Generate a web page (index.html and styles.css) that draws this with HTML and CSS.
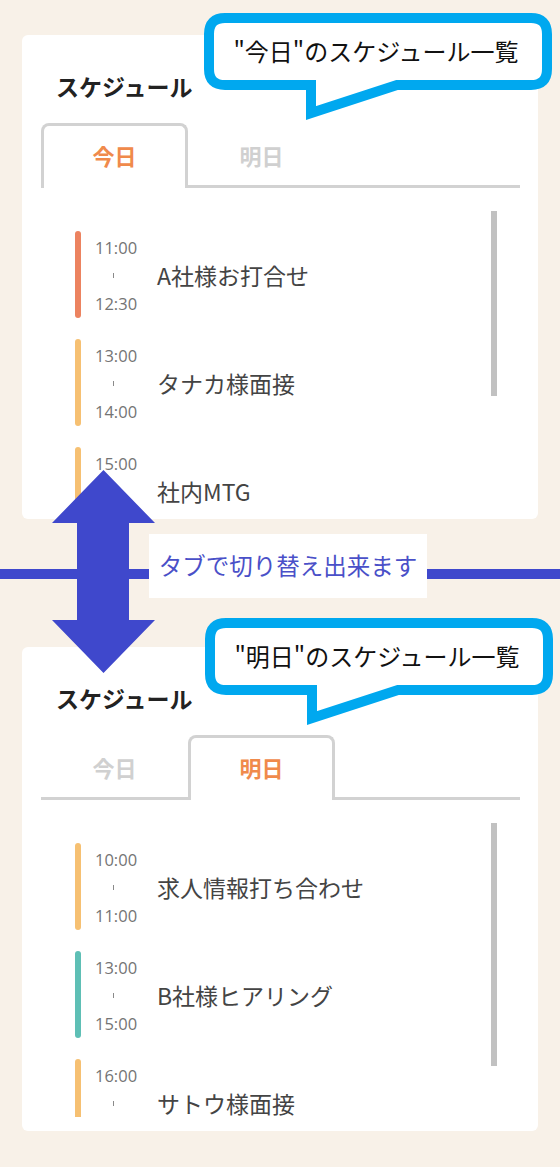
FILE: index.html
```html
<!DOCTYPE html>
<html lang="ja">
<head>
<meta charset="utf-8">
<title>スケジュール</title>
<link rel="stylesheet" href="styles.css">
</head>
<body>
<div class="page">
  <section class="card">
    <div class="bubble bubble-today">
      <svg class="bubble-shape" width="348" height="110" viewBox="0 0 348 110"><path d="M21,5 H327 Q343,5 343,21 V56 Q343,72 327,72 H193 L107,100 V72 H21 Q5,72 5,56 V21 Q5,5 21,5 Z"/></svg>
      <p class="bubble-text">"今日"のスケジュール一覧</p>
    </div>
    <h2 class="card-title">スケジュール</h2>
    <div class="tabs">
      <div class="tab is-active">今日</div>
      <div class="tab">明日</div>
    </div>
    <div class="list">
      <div class="item">
        <span class="bar bar-coral"></span>
        <div class="time"><span>11:00</span><span class="tick"></span><span>12:30</span></div>
        <div class="title">A社様お打合せ</div>
      </div>
      <div class="item">
        <span class="bar bar-orange"></span>
        <div class="time"><span>13:00</span><span class="tick"></span><span>14:00</span></div>
        <div class="title">タナカ様面接</div>
      </div>
      <div class="item">
        <span class="bar bar-orange"></span>
        <div class="time"><span>15:00</span><span class="tick"></span></div>
        <div class="title">社内MTG</div>
      </div>
      <span class="scroll-thumb" style="height:185px"></span>
    </div>
  </section>

  <div class="divider">
    <div class="divider-label">タブで切り替え出来ます</div>
  </div>

  <section class="card">
    <div class="bubble bubble-tomorrow">
      <svg class="bubble-shape" width="348" height="110" viewBox="0 0 348 110"><path d="M21,5 H327 Q343,5 343,21 V56 Q343,72 327,72 H193 L107,100 V72 H21 Q5,72 5,56 V21 Q5,5 21,5 Z"/></svg>
      <p class="bubble-text">"明日"のスケジュール一覧</p>
    </div>
    <h2 class="card-title">スケジュール</h2>
    <div class="tabs">
      <div class="tab">今日</div>
      <div class="tab is-active">明日</div>
    </div>
    <div class="list">
      <div class="item">
        <span class="bar bar-orange"></span>
        <div class="time"><span>10:00</span><span class="tick"></span><span>11:00</span></div>
        <div class="title">求人情報打ち合わせ</div>
      </div>
      <div class="item">
        <span class="bar bar-teal"></span>
        <div class="time"><span>13:00</span><span class="tick"></span><span>15:00</span></div>
        <div class="title">B社様ヒアリング</div>
      </div>
      <div class="item">
        <span class="bar bar-orange"></span>
        <div class="time"><span>16:00</span><span class="tick"></span></div>
        <div class="title">サトウ様面接</div>
      </div>
      <span class="scroll-thumb" style="height:243px"></span>
    </div>
  </section>

  <svg class="switch-arrow" width="103" height="203" viewBox="0 0 103 203"><path d="M51.5,0 L103,53 H77 V150 H103 L51.5,203 L0,150 H25 V53 H0 Z"/></svg>
</div>
</body>
</html>
```

FILE: styles.css
```css
* {
  box-sizing: border-box;
}

html, body {
  margin: 0;
  padding: 0;
}

body {
  background: #f8f1e8;
  font-family: "Noto Sans CJK JP", "Noto Sans", sans-serif;
  color: #333;
}

.page {
  position: relative;
  width: 560px;
  min-height: 1167px;
  padding-top: 35px;
}

.card {
  position: relative;
  margin: 0 22px;
  height: 484px;
  background: #fff;
  border-radius: 6px;
  padding: 36px 18px 14px 19px;
}

.card-title {
  margin: 0 0 0 15px;
  font-size: 23px;
  line-height: 30px;
  height: 30px;
  font-weight: 700;
  color: #222;
}

/* tabs */
.tabs {
  display: flex;
  margin-top: 22px;
  height: 65px;
  border-bottom: 3px solid #d2d2d2;
}

.tab {
  width: 147px;
  height: 65px;
  margin-bottom: -3px;
  padding-bottom: 4px;
  border: 3px solid transparent;
  border-bottom: 0;
  border-radius: 8px 8px 0 0;
  display: flex;
  align-items: center;
  justify-content: center;
  font-size: 22px;
  font-weight: 700;
  color: #d0d0d0;
}

.tab.is-active {
  border-color: #d2d2d2;
  background: #fff;
  color: #f08a4b;
}

/* list */
.list {
  position: relative;
  margin-top: 23px;
  height: 294px;
  overflow: hidden;
  padding: 20px 0 0 34px;
}

.item {
  display: flex;
  height: 87px;
  margin-bottom: 21px;
}

.bar {
  flex: 0 0 6px;
  border-radius: 3px;
}

.bar-coral { background: #ec8360; }
.bar-orange { background: #f6c072; }
.bar-teal { background: #5ebfb5; }

.time {
  display: flex;
  flex-direction: column;
  width: 46px;
  margin-left: 14px;
  padding-top: 3px;
  font-family: "Open Sans", "Noto Sans", sans-serif;
  font-size: 16.5px;
  line-height: 28px;
  color: #747474;
}

.tick {
  display: block;
  height: 28px;
}

.tick::before {
  content: "";
  display: block;
  width: 1px;
  height: 5px;
  margin: 11px 0 0 18px;
  background: #8a8a8a;
}

.title {
  align-self: center;
  margin-left: 16px;
  padding-top: 1px;
  font-size: 23px;
  line-height: 20px;
  color: #444;
  white-space: nowrap;
}

.scroll-thumb {
  position: absolute;
  top: 0;
  left: 450px;
  width: 6px;
  background: #c1c1c1;
}

/* speech bubbles */
.bubble {
  position: absolute;
  width: 348px;
  height: 110px;
  z-index: 2;
}

.bubble-today {
  left: 182px;
  top: -22px;
}

.bubble-tomorrow {
  left: 183px;
  top: -29px;
}

.bubble-shape {
  position: absolute;
  left: 0;
  top: 0;
  overflow: visible;
}

.bubble-shape path {
  fill: #fff;
  stroke: #00a8ef;
  stroke-width: 10;
  stroke-linejoin: miter;
}

.bubble-text {
  position: relative;
  margin: 0;
  height: 77px;
  display: flex;
  align-items: center;
  justify-content: center;
  padding-right: 4px;
  padding-bottom: 2px;
  font-size: 24px;
  color: #111;
  white-space: nowrap;
}

/* divider between the two examples */
.divider {
  height: 128px;
  padding-top: 15px;
  display: flex;
  align-items: flex-start;
  background: linear-gradient(#3f48cc, #3f48cc) 0 50px / 100% 10px no-repeat;
}

.divider-label {
  margin-left: 149px;
  width: 278px;
  height: 64px;
  padding-bottom: 2px;
  background: #fff;
  display: flex;
  align-items: center;
  justify-content: center;
  font-size: 23.5px;
  color: #4a50c8;
  white-space: nowrap;
}

.switch-arrow {
  position: absolute;
  left: 52px;
  top: 470px;
  z-index: 3;
}

.switch-arrow path {
  fill: #3f48cc;
}
```
